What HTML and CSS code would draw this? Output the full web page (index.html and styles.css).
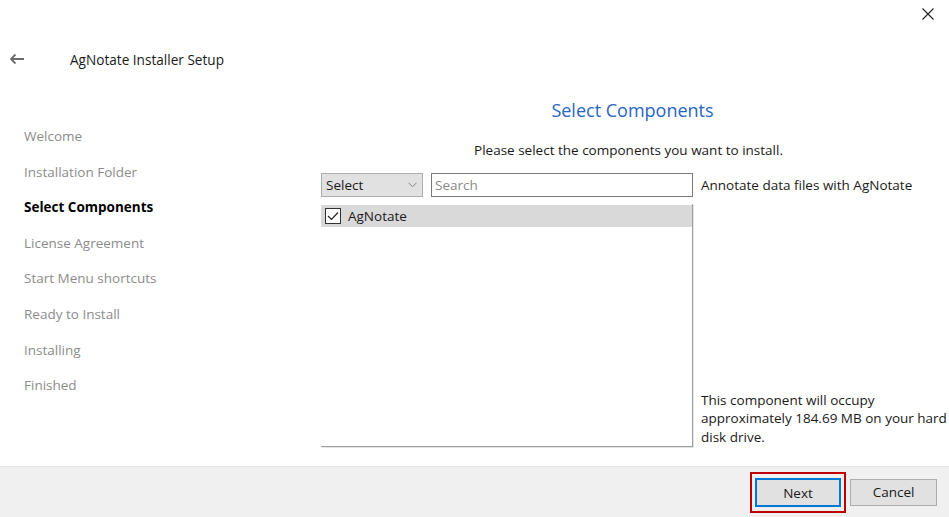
FILE: index.html
```html
<!DOCTYPE html>
<html>
<head>
<meta charset="utf-8">
<link rel="stylesheet" href="styles.css">
</head>
<body>
<div class="window">
  <div class="titlebar">
    <svg class="close" width="12" height="12" viewBox="0 0 12 12"><path d="M0.5 0.5 L11.5 11.5 M11.5 0.5 L0.5 11.5" stroke="#222" stroke-width="1.1" fill="none"/></svg>
  </div>
  <div class="header">
    <svg class="back" width="16" height="12" viewBox="0 0 16 12"><path d="M15 6 H2 M6.5 1.5 L2 6 L6.5 10.5" stroke="#6b6b6b" stroke-width="1.8" fill="none"/></svg>
    <span class="apptitle">AgNotate Installer Setup</span>
  </div>
  <div class="content">
    <ul class="steps">
      <li>Welcome</li>
      <li>Installation Folder</li>
      <li class="active">Select Components</li>
      <li>License Agreement</li>
      <li>Start Menu shortcuts</li>
      <li>Ready to Install</li>
      <li>Installing</li>
      <li>Finished</li>
    </ul>
    <div class="main">
      <h1 class="heading">Select Components</h1>
      <p class="sub">Please select the components you want to install.</p>
      <div class="grid">
        <div class="controls">
          <div class="select">
            <span>Select</span>
            <svg width="9" height="6" viewBox="0 0 9 6"><path d="M0.5 0.8 L4.5 4.8 L8.5 0.8" stroke="#808080" stroke-width="1" fill="none"/></svg>
          </div>
          <div class="search">Search</div>
        </div>
        <div class="desc">Annotate data files with AgNotate</div>
        <div class="list">
          <div class="row">
            <span class="check"><svg width="12" height="10" viewBox="0 0 12 10"><path d="M1 5 L4.5 8.5 L11 1.5" stroke="#222" stroke-width="1.2" fill="none"/></svg></span>
            <span>AgNotate</span>
          </div>
        </div>
        <div class="size">This component will occupy approximately 184.69 MB on your hard disk drive.</div>
      </div>
    </div>
  </div>
  <div class="footer">
    <div class="focus"><button class="btn primary">Next</button></div>
    <button class="btn">Cancel</button>
  </div>
</div>
</body>
</html>
```
FILE: styles.css
```css
html, body {
  margin: 0;
  padding: 0;
  background: #ffffff;
}
body {
  font-family: "Open Sans", "Noto Sans", "Liberation Sans", sans-serif;
  font-size: 13.5px;
  color: #1a1a1a;
}
.window {
  width: 949px;
  height: 517px;
  display: flex;
  flex-direction: column;
  overflow: hidden;
}
.titlebar {
  height: 30px;
  display: flex;
  justify-content: flex-end;
  align-items: flex-start;
}
.close {
  margin: 8px 15px 0 0;
}
.header {
  height: 60px;
  display: flex;
  align-items: center;
  box-sizing: border-box;
  padding-bottom: 1px;
}
.back {
  margin-left: 9px;
  margin-right: 45px;
  margin-top: -2px;
}
.apptitle {
  font-size: 13.6px;
  color: #1a1a1a;
}
.content {
  flex: 1;
  display: flex;
}
.steps {
  list-style: none;
  margin: 0;
  padding: 29px 0 0 24px;
  width: 297px;
}
.steps li {
  height: 35.6px;
  line-height: 35.6px;
  color: #8c8c8c;
  white-space: nowrap;
}
.steps li.active {
  color: #000;
  font-weight: 700;
}
.main {
  flex: 1;
  display: flex;
  flex-direction: column;
}
.heading {
  margin: 8px 0 0 0;
  height: 24px;
  line-height: 24px;
  font-size: 18px;
  font-weight: 400;
  color: #2866c4;
  text-align: center;
  padding-right: 5px;
}
.sub {
  margin: 18px 0 0 0;
  line-height: 20px;
  text-align: center;
  padding-right: 13px;
}
.grid {
  margin-top: 13px;
  display: grid;
  grid-template-columns: 372px 1fr;
  grid-template-rows: 24px 243px;
  column-gap: 8px;
  row-gap: 7px;
}
.controls {
  display: flex;
  gap: 8px;
}
.select {
  width: 102px;
  box-sizing: border-box;
  background: #e1e1e1;
  border: 1px solid #adadad;
  display: flex;
  align-items: center;
  justify-content: space-between;
  padding: 0 5px 0 4px;
}
.search {
  flex: 1;
  box-sizing: border-box;
  border: 1px solid #7a7a7a;
  color: #8a8a8a;
  padding-left: 3px;
  display: flex;
  align-items: center;
}
.desc {
  display: flex;
  align-items: center;
  white-space: nowrap;
}
.list {
  border-right: 1px solid #a0a0a0;
  border-bottom: 1px solid #a0a0a0;
  box-shadow: 1px 1px 0 #e3e3e3;
  background: #fff;
}
.row {
  margin-top: 1px;
  height: 22px;
  background: #d9d9d9;
  display: flex;
  align-items: center;
  padding-left: 4px;
  gap: 7px;
}
.check {
  width: 14px;
  height: 14px;
  border: 1px solid #333;
  background: #fff;
  display: flex;
  align-items: center;
  justify-content: center;
}
.size {
  align-self: end;
  line-height: 18.5px;
  padding-right: 2px;
  padding-bottom: 1px;
}
.footer {
  height: 51px;
  box-sizing: border-box;
  background: #f0f0f0;
  border-top: 1px solid #e6e6e6;
  display: flex;
  align-items: center;
  justify-content: flex-end;
  padding-right: 12px;
  gap: 4px;
}
.focus {
  border: 2px solid #c00000;
  padding: 4px 3px;
  display: flex;
  margin-top: 1px;
}
.btn {
  font-family: inherit;
  font-size: 13.5px;
  color: #1a1a1a;
  width: 87px;
  height: 27px;
  background: #e1e1e1;
  border: 1px solid #adadad;
  margin: 0;
  padding: 0;
}
.btn.primary {
  border: 2px solid #0078d7;
  width: 86px;
  height: 29px;
}
```
